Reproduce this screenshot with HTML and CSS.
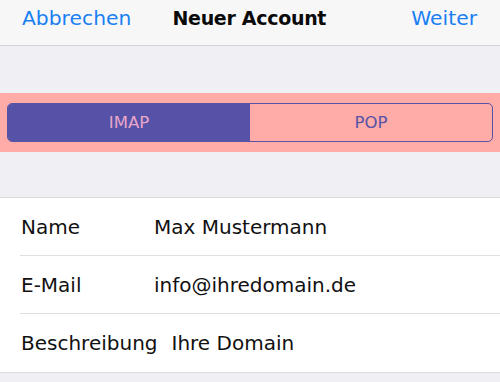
FILE: index.html
```html
<!DOCTYPE html>
<html lang="de">
<head>
<meta charset="utf-8">
<title>Neuer Account</title>
<link rel="stylesheet" href="styles.css">
</head>
<body>
<div class="screen">
  <header class="navbar">
    <span class="nav-link">Abbrechen</span>
    <span class="nav-title">Neuer Account</span>
    <span class="nav-link">Weiter</span>
  </header>
  <div class="spacer-top"></div>
  <div class="segment-band">
    <div class="segmented">
      <div class="segment active">IMAP</div>
      <div class="segment">POP</div>
    </div>
  </div>
  <div class="spacer-mid"></div>
  <section class="form">
    <div class="row">
      <span class="label">Name</span>
      <span class="value">Max Mustermann</span>
    </div>
    <div class="row">
      <span class="label">E-Mail</span>
      <span class="value">info@ihredomain.de</span>
    </div>
    <div class="row">
      <span class="label">Beschreibung</span>
      <span class="value">Ihre Domain</span>
    </div>
  </section>
</div>
</body>
</html>
```
FILE: styles.css
```css
html, body {
  margin: 0;
  padding: 0;
}
body {
  background: #efeff4;
  font-family: "DejaVu Sans", "Liberation Sans", sans-serif;
  width: 500px;
  height: 382px;
  overflow: hidden;
}
.screen {
  display: flex;
  flex-direction: column;
}
.navbar {
  height: 46px;
  box-sizing: border-box;
  padding: 6px 23px 0 22px;
  background: #f7f7f8;
  border-bottom: 1px solid #d4d4d7;
  display: flex;
  justify-content: space-between;
  align-items: flex-start;
}
.nav-link {
  color: #1a7ff2;
  font-size: 20.3px;
  line-height: 24px;
}
.nav-title {
  color: #0a0a0a;
  font-weight: bold;
  font-size: 19px;
  letter-spacing: -0.3px;
  line-height: 24px;
  margin-left: 36px;
  margin-right: 80px;
}
.spacer-top {
  height: 47px;
}
.segment-band {
  background: #ffaba7;
  padding: 10px 7px;
}
.segmented {
  display: flex;
  height: 39px;
  box-sizing: border-box;
  border: 1px solid #5552a8;
  border-radius: 5px;
  overflow: hidden;
}
.segment {
  flex: 1;
  display: flex;
  align-items: center;
  justify-content: center;
  font-size: 16.5px;
  color: #5552a8;
}
.segment.active {
  background: #5552a8;
  color: #e9a6c9;
}
.spacer-mid {
  height: 45px;
}
.form {
  background: #ffffff;
  border-top: 1px solid #dcdce0;
  border-bottom: 1px solid #dcdce0;
}
.row {
  height: 57px;
  margin-left: 20px;
  padding-left: 1px;
  display: flex;
  align-items: center;
  border-bottom: 1px solid #e0e0e3;
  color: #111111;
  font-size: 20px;
}
.row:last-child {
  border-bottom: none;
  height: 58px;
}
.label {
  min-width: 119px;
  margin-right: 14px;
}
```
